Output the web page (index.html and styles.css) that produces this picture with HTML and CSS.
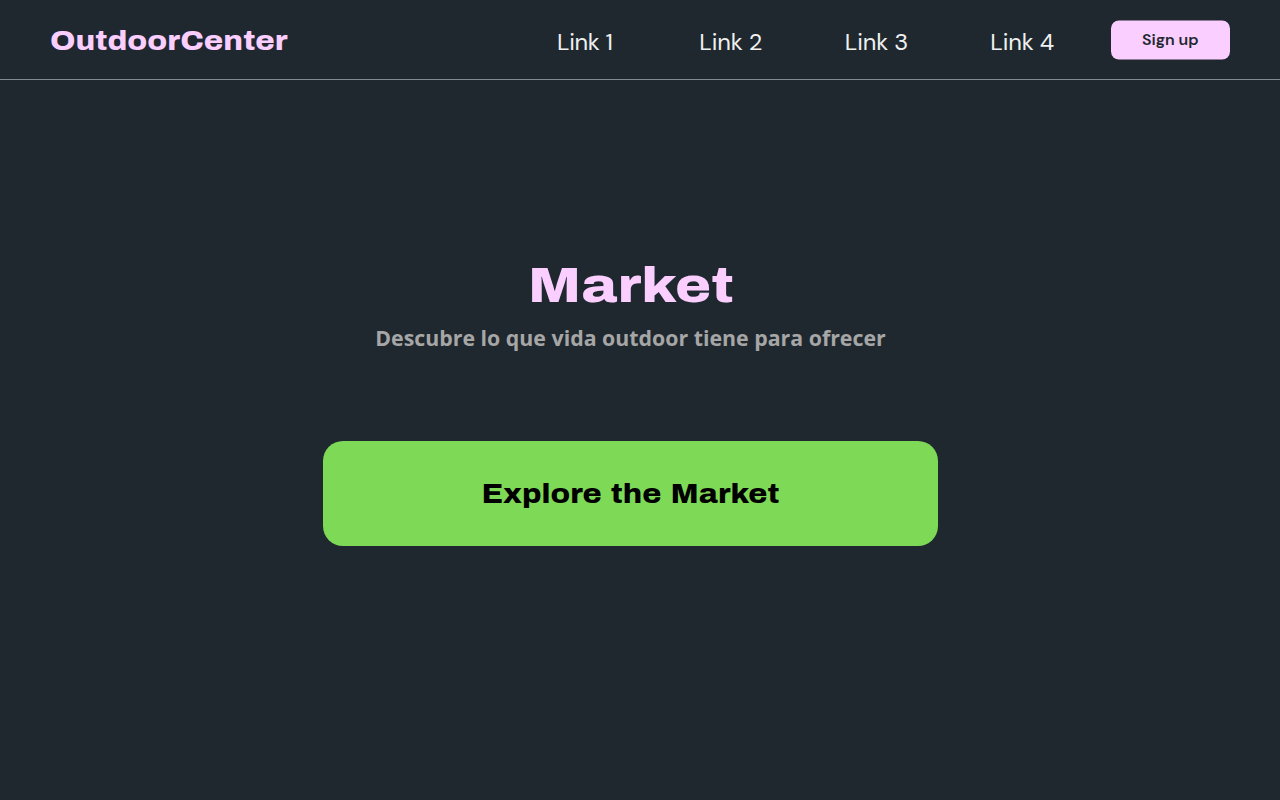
FILE: index.html
```html
<!DOCTYPE html>
<html lang="es">
<head>
<meta charset="utf-8">
<title>OutdoorCenter</title>
<link rel="stylesheet" href="styles.css">
</head>
<body>
<header class="navbar">
  <a class="brand"><span class="brand-text">OutdoorCenter</span></a>
  <nav class="links">
    <a class="link link-1">Link 1</a>
    <a class="link">Link 2</a>
    <a class="link">Link 3</a>
    <a class="link">Link 4</a>
  </nav>
  <button class="signup"><span class="signup-text">Sign up</span></button>
</header>
<main class="hero">
  <h1 class="title"><span class="title-text">Market</span></h1>
  <p class="subtitle">Descubre lo que vida outdoor tiene para ofrecer</p>
  <button class="explore"><span class="explore-text">Explore the Market</span></button>
</main>
</body>
</html>
```

FILE: styles.css
```css
* { box-sizing: border-box; }
body {
  margin: 0;
  height: 800px;
  background: #1f282f;
  font-family: "Open Sans", sans-serif;
  overflow: hidden;
}
.navbar {
  display: flex;
  align-items: center;
  height: 80px;
  padding: 0 50px;
  border-bottom: 1px solid #838a94;
}
.brand {
  width: 507px;
  color: #facfff;
  font: 800 27.5px/40px Archivo, Inter, sans-serif;
  white-space: nowrap;
}
.brand-text, .title-text, .explore-text, .signup-text {
  display: inline-block;
}
.brand-text {
  padding-top: 2px;
  transform: scaleX(1.145);
  transform-origin: left center;
}
.title-text { transform: translateY(1px) scaleX(1.16); }
.explore-text { transform: scaleX(1.125); word-spacing: 3px; }
.signup-text { transform: translateY(-0.5px); }
.links { display: flex; gap: 82.3px; width: 554px; padding-top: 4px; }
.link {
  width: 63.2px;
  color: #f0f0f0;
  font: 400 23.7px/40px "DM Sans", Inter, sans-serif;
  font-variation-settings: "opsz" 14;
  letter-spacing: -0.1px;
  white-space: nowrap;
}
.link-1 { width: 60px; letter-spacing: -0.3px; }
.signup {
  width: 119.5px;
  height: 39px;
  margin: 0 0 0 -0.5px;
  padding: 0;
  border: 0;
  border-radius: 8px;
  background: #facfff;
  color: #1f282f;
  font: 600 16px/38px "DM Sans", Inter, sans-serif;
  transform: translateY(0.5px);
}
.hero {
  display: flex;
  flex-direction: column;
  align-items: center;
  width: 1261px;
  padding-top: 175px;
}
.title {
  margin: 0;
  color: #facfff;
  font: 800 50.5px/60px Archivo, Inter, sans-serif;
}
.subtitle {
  margin: 8px 0 0;
  color: #a6a6a6;
  font: 700 21.33px/30px "Open Sans", sans-serif;
  white-space: nowrap;
}
.explore {
  width: 615px;
  height: 105px;
  margin-top: 88px;
  padding: 0;
  border: 0;
  border-radius: 20px;
  background: #7ed957;
  color: #000;
  font: 800 27.5px/40px Archivo, Inter, sans-serif;
}
```
